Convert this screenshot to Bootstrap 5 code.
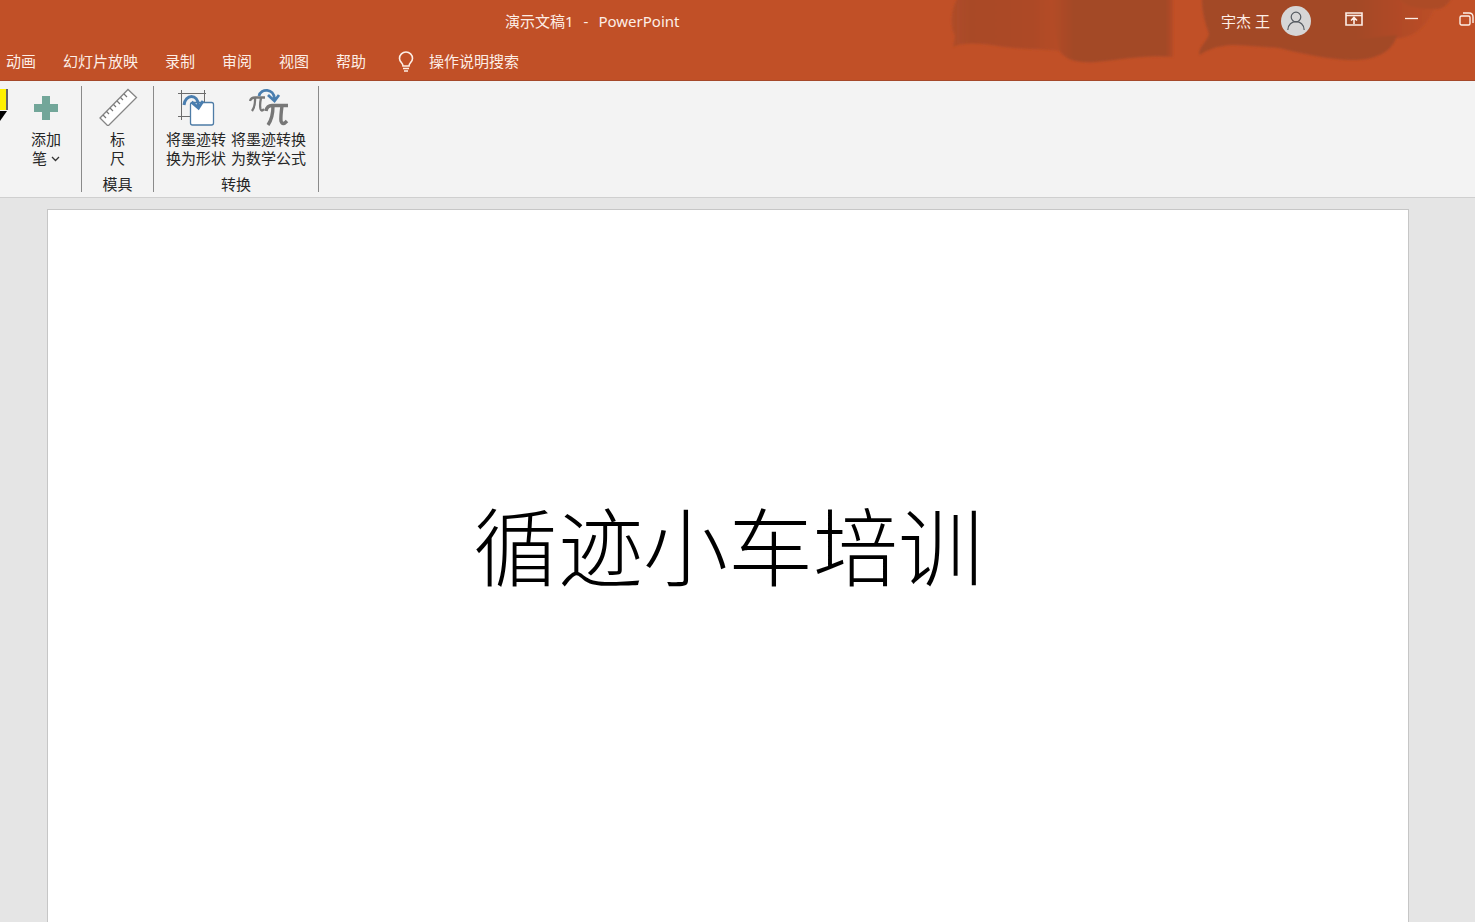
<!DOCTYPE html>
<html lang="zh-CN">
<head>
<meta charset="utf-8">
<meta name="viewport" content="width=device-width, initial-scale=1">
<title>演示文稿1 - PowerPoint</title>
<link href="https://cdn.jsdelivr.net/npm/bootstrap@5.3.0/dist/css/bootstrap.min.css" rel="stylesheet">
<style>
  body { font: 15px/20px "Noto Sans", "Noto Sans CJK SC", sans-serif; background: #e5e5e5; color: #262626; }
  .app-head { background: #c15027; color: #fdeee6; border-bottom: 1px solid #a5482a; }
  .head-art { right: 0; top: 0; width: 540px; height: 80px; }
  .title-row { height: 42px; padding-left: 505px; }
  .doc-title { gap: 10px; }
  .win-btn, .tool-btn { border: 0; background: none; color: inherit; padding: 0; }
  .win-set { gap: 37px; margin-right: -2px; }
  .user-btn { gap: 11px; margin-right: 34px; }
  .tab-row { height: 38px; padding-left: 6px; gap: 27px; }
  .tab-row a { color: inherit; text-decoration: none; }
  .tell-me { gap: 15px; margin-left: 5px; }
  .tell-me input { width: 160px; border: 0; background: none; padding: 0; color: inherit; font: inherit; outline: 0; }
  .tell-me input::placeholder { color: #fdeee6; opacity: 1; }
  .ribbon { background: #f3f3f3; border-bottom: 1px solid #cfcfcf; padding: 5px 0; }
  .tool-group { border-right: 1px solid #8a8a8a; height: 106px; }
  .tool-set { gap: 5px; }
  .tool-btn { line-height: 19px; }
  .tool-btn svg { display: block; margin: 2px auto 4px; }
  .g-pens { width: 82px; } .g-stencil { width: 72px; } .g-convert { width: 165px; }
  .g-pens .tool-set { gap: 18px; }
  .stage { padding: 11px 66px 0 47px; }
  .slide { background: #fff; border: 1px solid #c6c6c6; border-bottom: 0; padding-top: 287px; }
  .slide h1 { font-size: 85px; line-height: 100px; font-weight: 200; color: #000; }
</style>
</head>
<body class="d-flex flex-column min-vh-100 overflow-hidden">
<header class="app-head position-relative">
  <svg class="head-art position-absolute" viewBox="0 0 540 80" aria-hidden="true">
    <defs>
      <linearGradient id="fade" x1="0" x2="1"><stop offset="0" stop-color="#a94a28" stop-opacity=".75"/><stop offset=".15" stop-color="#a94a28"/><stop offset=".65" stop-color="#ad4a27"/><stop offset="1" stop-color="#ba4e27"/></linearGradient>
      <linearGradient id="block" x1="0" x2="1"><stop offset="0" stop-color="#b64d28"/><stop offset=".2" stop-color="#a34828"/><stop offset=".94" stop-color="#a34828"/><stop offset="1" stop-color="#b54c28"/></linearGradient>
      <linearGradient id="sweep" gradientUnits="userSpaceOnUse" x1="420" x2="500" y1="0" y2="0"><stop offset="0" stop-color="#a34828"/><stop offset=".5" stop-color="#b04a27"/><stop offset="1" stop-color="#bb4e27"/></linearGradient>
      <filter id="soft" x="-10%" y="-10%" width="120%" height="120%"><feGaussianBlur stdDeviation="1"/></filter>
    </defs>
    <g filter="url(#soft)">
      <path d="M24 -4C15 8 15 28 20 36L18 47C30 41 50 44 70 47C95 50 120 49 140 53V-4Z" fill="url(#fade)"/>
      <path d="M114 -4H238V57C210 54 185 60 160 62C142 63 130 60 124 50Z" fill="url(#block)"/>
      <path d="M267 -4H505C495 24 480 40 458 38C440 42 420 46 400 46C410 54 350 48 300 45C280 45 270 52 264 55C264 46 272 42 274 34C270 22 267 12 267 0Z" fill="url(#sweep)"/>
      <path d="M462 35C458 52 440 60 418 60C395 60 365 53 335 46C380 49 425 38 462 35Z" fill="#a34828"/>
      <path d="M462 -4H518C512 6 508 10 496 9C484 9 470 8 462 -4Z" fill="#ad4b28"/>
    </g>
  </svg>
  <div class="title-row position-relative d-flex align-items-center">
    <div class="doc-title d-flex text-nowrap me-auto"><span>演示文稿1</span><span>-</span><span>PowerPoint</span></div>
    <button type="button" class="win-btn user-btn d-flex align-items-center text-nowrap">宇杰 王
      <svg width="30" height="30" viewBox="0 0 30 30"><circle cx="15" cy="15" r="15" fill="#d6d6d6"/><g fill="none" stroke="#555b61" stroke-width="1.2"><circle cx="15" cy="11" r="4.8"/><path d="M6.8 24C7 12.800 23 12.800 23.200 24"/></g></svg>
    </button>
    <div class="win-set d-flex align-items-center flex-shrink-0">
      <button type="button" class="win-btn" aria-label="功能区显示选项"><svg class="d-block mb-1" width="18" height="14" viewBox="0 0 18 14" fill="none" stroke="#fdeee6" stroke-width="1.6"><path d="M1 1H17V13H1ZM1 3.500H17M9 12V6M6 8.500L9 5.500L12 8.500"/></svg></button>
      <button type="button" class="win-btn" aria-label="最小化"><svg class="d-block mb-1" width="22" height="14" viewBox="0 0 22 14" stroke="#fdeee6" stroke-width="1.3"><path d="M5 6.500H18"/></svg></button>
      <button type="button" class="win-btn" aria-label="还原"><svg class="d-block mb-1" width="18" height="14" viewBox="0 0 18 14" fill="none" stroke="#fdeee6" stroke-width="1.4"><rect x="1" y="4" width="10" height="9" rx="1.500"/><path d="M4 1H10Q14 1 14 5V11"/></svg></button>
    </div>
  </div>
  <nav class="tab-row position-relative d-flex align-items-center text-nowrap">
    <a href="#">动画</a><a href="#">幻灯片放映</a><a href="#">录制</a><a href="#">审阅</a><a href="#">视图</a><a href="#">帮助</a>
    <label class="tell-me d-flex align-items-center">
      <svg width="16" height="22" viewBox="0 0 16 22" fill="none" stroke="#fdeee6" stroke-width="1.600"><path d="M5 16C5 13 1.500 12 1.500 8.500A6.500 6.500 0 0 1 14.500 8.500C14.500 12 11 13 11 16ZM5 18.500H11M6 21H10"/></svg>
      <input type="text" placeholder="操作说明搜索" aria-label="操作说明搜索">
    </label>
  </nav>
</header>

<div class="ribbon d-flex" role="toolbar">
  <section class="tool-group g-pens">
    <div class="tool-set d-flex align-items-start">
      <button type="button" class="tool-btn" aria-label="荧光笔"><svg width="8" height="36" viewBox="0 0 8 36"><path d="M0 1H6V22H0Z" fill="#fff100"/><path d="M7 1V22" stroke="#333" stroke-width="1.500"/><path d="M0 23H7L0 33Z" fill="#000"/></svg></button>
      <button type="button" class="tool-btn"><svg width="40" height="38" viewBox="0 0 40 38"><path d="M16 8H24V16H32V24H24V32H16V24H8V16H16Z" fill="#72a699"/></svg>添加<br>笔 <svg class="d-inline m-0" width="9" height="8" viewBox="0 0 9 8" fill="none" stroke="#333" stroke-width="1.300"><path d="M1 1L4.500 4.500L8 1"/></svg></button>
    </div>
  </section>
  <section class="tool-group g-stencil d-flex flex-column align-items-center">
    <button type="button" class="tool-btn"><svg width="40" height="38" viewBox="0 0 40 38"><path d="M2 30L30 1.500L38.500 9.500L10 38Z" fill="#fff" stroke="#858585" stroke-width="1.300"/><path d="M5 27L8 30M8.500 23.500L11 26M12 20L15 23M15.500 16.500L18 19M19 13L22 16M22.500 9.500L25 12M26 6L29 9" stroke="#777" stroke-width="1.200"/></svg>标<br>尺</button>
    <div class="mt-auto lh-1">模具</div>
  </section>
  <section class="tool-group g-convert d-flex flex-column align-items-center">
    <div class="tool-set d-flex">
      <button type="button" class="tool-btn"><svg width="40" height="38" viewBox="0 0 40 38" fill="none"><path d="M2 5.500H30M5.500 2V32M28.500 2V14M2 28.500H14" stroke="#6c6c6c"/><rect x="14.500" y="14.500" width="23" height="22.500" rx="2" fill="#fff" stroke="#4e7ca6" stroke-width="1.300"/><path d="M8 17C9 6 22 5 22.500 18" stroke="#4a7eaf" stroke-width="3"/><path d="M15.500 14L22.500 20L27 13" stroke="#4a7eaf" stroke-width="3"/></svg>将墨迹转<br>换为形状</button>
      <button type="button" class="tool-btn"><svg width="40" height="38" viewBox="0 0 40 38" fill="none" stroke="#777"><path d="M1 13Q2 9.500 6 9.500H16M6 10Q6.500 18 3 23M12 10Q10.500 17 11.500 21Q12.500 24 15 21" stroke-width="2.300"/><path d="M17 23Q18 17.500 23 17.500H39M24 18Q24 30 19 37M33 18Q31.500 29 32 33Q33.500 38 38 33" stroke-width="3.400"/><path d="M10 8C12 0 25 0 25.500 11M19 7L25.500 13L30 7" stroke="#4a7eaf" stroke-width="2.800"/></svg>将墨迹转换<br>为数学公式</button>
    </div>
    <div class="mt-auto lh-1">转换</div>
  </section>
</div>

<main class="stage d-flex flex-column flex-grow-1">
  <section class="slide flex-grow-1 text-center">
    <h1 class="m-0">循迹小车培训</h1>
  </section>
</main>
<script src="https://cdn.jsdelivr.net/npm/bootstrap@5.3.0/dist/js/bootstrap.bundle.min.js"></script>
</body>
</html>
